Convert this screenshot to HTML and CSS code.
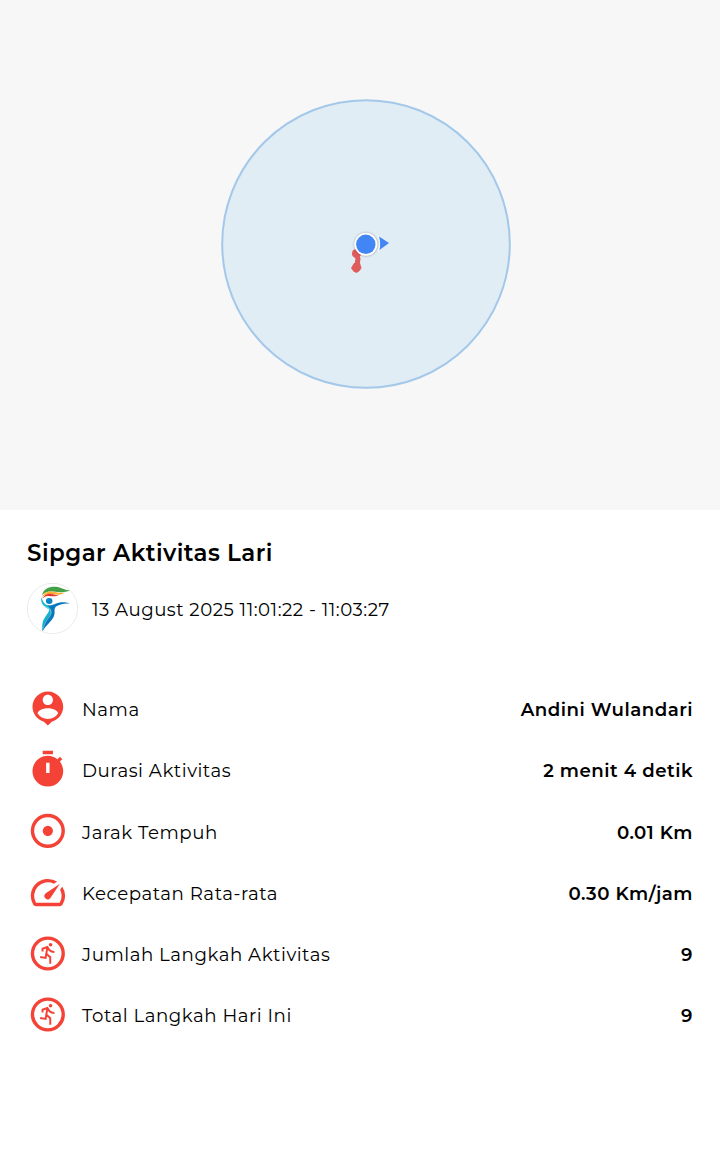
FILE: index.html
```
<!DOCTYPE html>
<html lang="id">

<head>
    <meta charset="UTF-8">
    <meta name="viewport" content="width=device-width, initial-scale=1.0">
    <title>Sipgar Aktivitas Lari</title>
    <link rel="stylesheet" href="styles.css">
</head>

<body>
    <svg class="map" viewBox="0 0 720 510">
        <circle class="accuracy" cx="366" cy="244" r="143.8" />
        <path class="track" d="M356.500 254L358 259L356.500 268" />
        <circle class="track-point" cx="356.500" cy="253.500" r="4.600" />
        <path class="track-point" d="M354 263L360 263L361.500 268L359.500 271L356.500 273L353.500 271.500L351 268z" />
        <circle class="dot-shadow outer" cx="366" cy="244.500" r="13.500" />
        <circle class="dot-shadow" cx="366" cy="244.500" r="12.500" />
        <circle class="dot-border" cx="365.800" cy="244.300" r="11.500" />
        <circle class="dot" cx="365.800" cy="244.300" r="9.700" />
        <path class="halo" d="M378 236Q382 243 378 251" />
        <path class="dot" d="M379 236.500L389 243L379.500 250Q381 243 379 236.500z" />
    </svg>

    <div class="detail">
        <h1>Sipgar Aktivitas Lari</h1>
        <div class="date-row">
            <svg class="logo" viewBox="0 0 51 51">
                <circle cx="25.500" cy="25.500" r="25.200" fill="#fff" stroke="#ddd" stroke-width=".6" />
                <path fill="#43a047" d="M15 12C17 5 23 3 31 4C35 5 38 7 43 7.500C37 10 32 9 26 8.500C20 8 17 10 15 12z" />
                <path fill="#fbb034" d="M15 14C18 8 23 8 28 9C32 10 35 10 38 9.500C33 13 29 11.500 24 11C19 11 17 13 15 14z" />
                <path fill="#e53935" d="M15 16C18 11 22 10.500 25 11C28 12 30 12 32 12C28 14 25 13 21 13C18 13 16 15 15 16z" />
                <ellipse cx="22.200" cy="18" rx="3.300" ry="2.900" fill="#0b84c4" />
                <path fill="#12b5cb" d="M14.500 14C13 20 17 24 22 26C23 29 18 33 16 38C15 42 15 45 15.500 48C18 43 23 39 26 34C29 29 25 26 28 23C22 24 16 22 14.500 14z" />
                <path fill="#0878be" d="M43 20.500C38 18.500 32 19 28 21C25 22 23 23 20 22C25 26 25 28 23 32C20 36 16 40 15.500 48C19 42 24 39 26.500 34C29 29 26 27 29 23.500C33 21 38 20.500 43 20.500z" />
                <path fill="none" stroke="#fff" stroke-width=".4" d="M17 23C23 25 26 28 23 33C19 38 17 41 16 46" />
            </svg>
            <span class="date">13 August 2025 11:01:22 - 11:03:27</span>
        </div>

        <div class="list">
            <div class="item">
                <svg class="icon" viewBox="-.2 0 24 24">
                    <path fill-rule="evenodd" d="M12 2c-4.970 0-9 4.030-9 9 0 4.170 2.840 7.670 6.690 8.690L12 22l2.310-2.310C18.160 18.670 21 15.170 21 11c0-4.970-4.030-9-9-9zm0 2c1.660 0 3 1.340 3 3s-1.340 3-3 3-3-1.340-3-3 1.340-3 3-3zm0 14.200c-2.500 0-4.710-1.280-6-3.220.03-1.990 4-3.080 6-3.080 1.990 0 5.970 1.090 6 3.080-1.290 1.940-3.500 3.220-6 3.220z" />
                </svg>
                <span class="label">Nama</span>
                <span class="value">Andini Wulandari</span>
            </div>
            <div class="item">
                <svg class="icon" viewBox="-.2 0 24 24">
                    <path fill-rule="evenodd" d="M15 1H9v2h6V1zm-4 13h2V8h-2v6zm8.030-6.610l1.420-1.420c-.43-.51-.9-.99-1.410-1.410l-1.420 1.420C16.070 4.740 14.120 4 12 4c-4.970 0-9 4.030-9 9s4.020 9 9 9 9-4.030 9-9c0-2.120-.74-4.070-1.970-5.610z" />
                </svg>
                <span class="label">Durasi Aktivitas</span>
                <span class="value">2 menit 4 detik</span>
            </div>
            <div class="item">
                <svg class="icon" viewBox="-.2 .4 24 24">
                    <circle class="ring" cx="12" cy="12" r="9" />
                    <circle cx="12" cy="12" r="3" />
                </svg>
                <span class="label">Jarak Tempuh</span>
                <span class="value">0.01 Km</span>
            </div>
            <div class="item">
                <svg class="icon" viewBox="-.2 0 24 24">
                    <path d="M20.380 8.570l-1.230 1.850a8 8 0 0 1-.22 7.580H5.070A8 8 0 0 1 15.580 6.850l1.850-1.230A10 10 0 0 0 3.350 19a2 2 0 0 0 1.720 1h13.850a2 2 0 0 0 1.740-1 10 10 0 0 0-.27-10.440zm-9.790 6.840a2 2 0 0 0 2.830 0l5.660-8.490-8.490 5.660a2 2 0 0 0 0 2.830z" />
                </svg>
                <span class="label">Kecepatan Rata-rata</span>
                <span class="value">0.30 Km/jam</span>
            </div>
            <div class="item">
                <svg class="icon" viewBox="-.2 0 24 24">
                    <circle class="ring" cx="12" cy="12" r="9" />
                    <g id="run">
                        <circle cx="13.600" cy="6.900" r="1.050" />
                        <path class="runner" d="M8.900 10.900V9.200L11.700 8.200L13 10.100Q14 11.100 15.900 11.200M11.700 8.500L10.700 14.600L7.500 14M11.300 12.300L13.400 14.200V18" />
                    </g>
                </svg>
                <span class="label">Jumlah Langkah Aktivitas</span>
                <span class="value">9</span>
            </div>
            <div class="item">
                <svg class="icon" viewBox="-.2 0 24 24">
                    <circle class="ring" cx="12" cy="12" r="9" />
                    <use href="#run" />
                </svg>
                <span class="label">Total Langkah Hari Ini</span>
                <span class="value">9</span>
            </div>
        </div>
    </div>
</body>

</html>
```
FILE: styles.css
```
body {
    font-family: Montserrat, Inter, sans-serif;
    margin: 0;
    padding: 0;
    background-color: #fff;
    color: #000;
}

.map {
    display: block;
    width: 720px;
    height: 510px;
    background-color: #f7f7f7;
}

.accuracy {
    fill: #e1edf5;
    stroke: #a4c8e9;
    stroke-width: 2;
}

.track {
    fill: none;
    stroke: #e05c5c;
    stroke-width: 5;
}

.track-point {
    fill: #e05c5c;
}

.dot-shadow {
    fill: #000;
    opacity: 0.08;
}

.dot-shadow.outer {
    opacity: 0.04;
}

.dot-border {
    fill: #fff;
}

.dot {
    fill: #4285f4;
}

.halo {
    fill: none;
    stroke: #fff;
    stroke-width: 1.5;
    opacity: 0.7;
}

.detail {
    padding: 28px 27px 0;
}

h1 {
    margin: 0;
    font-size: 23px;
    line-height: 30px;
    font-weight: 600;
    letter-spacing: 0.45px;
}

.date-row {
    display: flex;
    align-items: center;
    gap: 14px;
    margin-top: 15px;
}

.logo {
    width: 51px;
    height: 51px;
}

.date {
    font-size: 18.2px;
    font-weight: 400;
    letter-spacing: 0.5px;
    padding-top: 2px;
}

.list {
    margin-top: 44px;
}

.item {
    display: flex;
    align-items: center;
    height: 61.25px;
}

.icon {
    width: 41px;
    height: 41px;
    fill: #f44336;
}

.ring {
    fill: none;
    stroke: #f44336;
    stroke-width: 2;
}

.runner {
    fill: none;
    stroke: #f44336;
    stroke-width: 1.15;
}

.label {
    flex: 1;
    margin-left: 14px;
    padding-top: 3px;
    font-size: 18.2px;
    line-height: 22px;
    font-weight: 400;
    letter-spacing: 0.54px;
}

.value {
    padding-top: 3px;
    font-size: 18.2px;
    line-height: 22px;
    font-weight: 600;
    letter-spacing: 0.5px;
}
```
